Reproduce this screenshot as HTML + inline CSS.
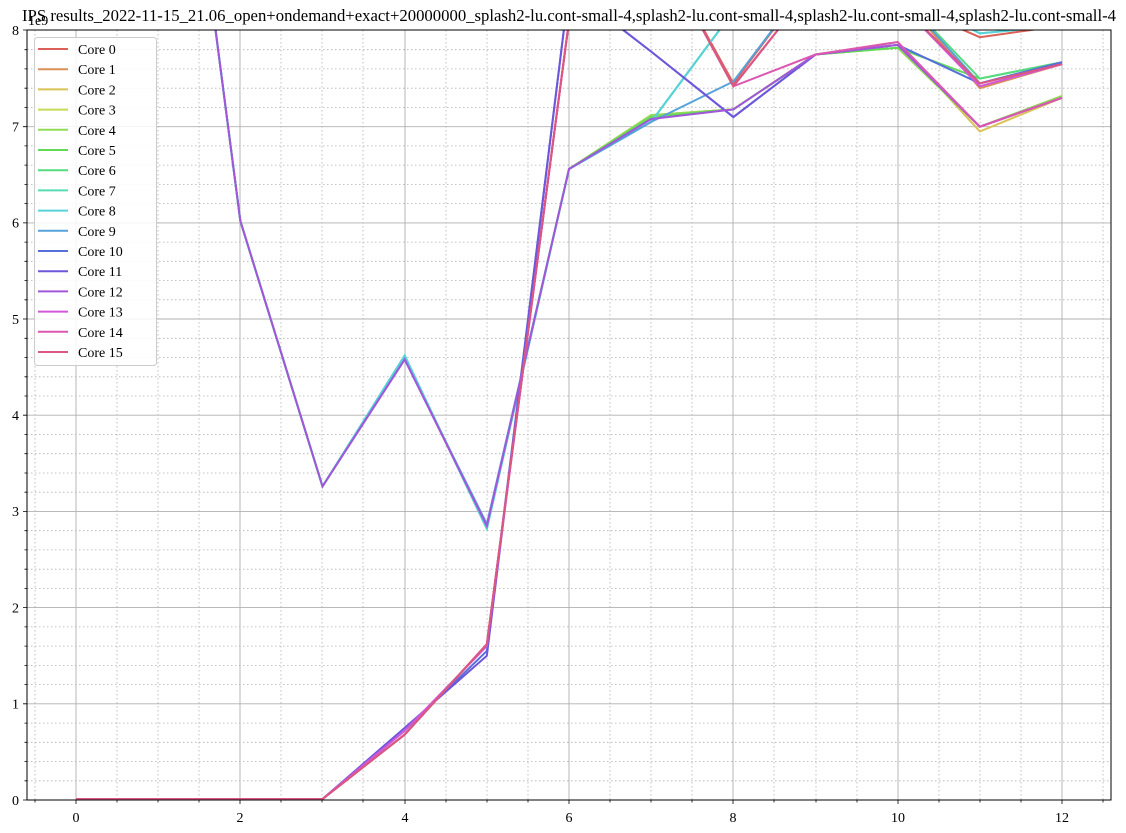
<!DOCTYPE html>
<html><head><meta charset="utf-8"><style>
html,body{margin:0;padding:0;background:#fff;}
svg{display:block;font-family:"Liberation Serif",serif;}
</style></head><body>
<svg width="1126" height="833" viewBox="0 0 1126 833" xmlns="http://www.w3.org/2000/svg">
<defs><clipPath id="c"><rect x="27" y="30" width="1084" height="770"/></clipPath></defs>
<rect width="1126" height="833" fill="#fff"/>
<g stroke="#b0b0b0" stroke-width="0.8" stroke-dasharray="1.5,2.5" fill="none">
<path d="M35 30V800M117 30V800M158 30V800M199 30V800M281 30V800M322 30V800M363 30V800M446 30V800M487 30V800M528 30V800M610 30V800M651 30V800M692 30V800M774 30V800M816 30V800M857 30V800M939 30V800M980 30V800M1021 30V800M1103 30V800"/>
<path d="M27 780.8H1111M27 761.5H1111M27 742.3H1111M27 723.1H1111M27 684.6H1111M27 665.4H1111M27 646.1H1111M27 626.9H1111M27 588.4H1111M27 569.2H1111M27 549.9H1111M27 530.7H1111M27 492.2H1111M27 473H1111M27 453.7H1111M27 434.5H1111M27 396H1111M27 376.8H1111M27 357.5H1111M27 338.3H1111M27 299.8H1111M27 280.6H1111M27 261.3H1111M27 242.1H1111M27 203.6H1111M27 184.4H1111M27 165.1H1111M27 145.9H1111M27 107.4H1111M27 88.2H1111M27 68.9H1111M27 49.7H1111"/>
</g>
<g stroke="#b0b0b0" stroke-width="0.9" fill="none">
<path d="M76 30V800M240 30V800M405 30V800M569 30V800M733 30V800M898 30V800M1062 30V800"/>
<path d="M27 703.8H1111M27 607.6H1111M27 511.4H1111M27 415.2H1111M27 319H1111M27 222.9H1111M27 126.7H1111"/>
</g>
<g clip-path="url(#c)">
<g transform="translate(76,800) scale(82.17,-96.19)" fill="none" stroke-width="2">
<polyline vector-effect="non-scaling-stroke" stroke="hsl(4,65%,60%)" points="0,0.01 1,0.01 2,0.01 3,0.01 4,0.68 5,1.62 6,8.1 7,9 8,7.45 9,8.6 10,8.3 11,7.93 12,8.05"/>
<polyline vector-effect="non-scaling-stroke" stroke="hsl(26,65%,60%)" points="0,0.01 1,0.01 2,0.01 3,0.01 4,0.68 5,1.62 6,8.1 7,9 8,7.42 9,8.5 10,8.4 11,7.4 12,7.65"/>
<polyline vector-effect="non-scaling-stroke" stroke="hsl(49,65%,60%)" points="0,20 1,12.6 2,6.02 3,3.26 4,4.6 5,2.85 6,6.56 7,7.12 8,7.18 9,7.75 10,7.88 11,6.95 12,7.3"/>
<polyline vector-effect="non-scaling-stroke" stroke="hsl(71,65%,60%)" points="0,20 1,12.6 2,6.02 3,3.26 4,4.6 5,2.85 6,6.56 7,7.12 8,7.18 9,7.75 10,7.82 11,7.0 12,7.32"/>
<polyline vector-effect="non-scaling-stroke" stroke="hsl(94,65%,60%)" points="0,20 1,12.6 2,6.02 3,3.26 4,4.6 5,2.85 6,6.56 7,7.12 8,7.18 9,7.75 10,7.82 11,7.0 12,7.32"/>
<polyline vector-effect="non-scaling-stroke" stroke="hsl(116,65%,60%)" points="0,20 1,12.6 2,6.02 3,3.26 4,4.6 5,2.85 6,6.56 7,7.1 8,7.18 9,7.75 10,7.82 11,7.5 12,7.67"/>
<polyline vector-effect="non-scaling-stroke" stroke="hsl(139,65%,60%)" points="0,20 1,12.6 2,6.02 3,3.26 4,4.62 5,2.82 6,6.56 7,7.05 8,8.2 9,8.6 10,8.4 11,7.5 12,7.67"/>
<polyline vector-effect="non-scaling-stroke" stroke="hsl(161,65%,60%)" points="0,20 1,12.6 2,6.02 3,3.26 4,4.62 5,2.82 6,6.56 7,7.05 8,8.2 9,8.6 10,8.4 11,7.97 12,8.05"/>
<polyline vector-effect="non-scaling-stroke" stroke="hsl(184,65%,60%)" points="0,20 1,12.6 2,6.02 3,3.26 4,4.62 5,2.82 6,6.56 7,7.05 8,8.2 9,8.6 10,8.4 11,7.97 12,8.05"/>
<polyline vector-effect="non-scaling-stroke" stroke="hsl(206,65%,60%)" points="0,20 1,12.6 2,6.02 3,3.26 4,4.58 5,2.87 6,6.56 7,7.05 8,7.47 9,8.6 10,8.4 11,7.45 12,7.67"/>
<polyline vector-effect="non-scaling-stroke" stroke="hsl(229,65%,60%)" points="0,0.01 1,0.01 2,0.01 3,0.01 4,0.72 5,1.55 6,8.44 7,7.78 8,7.1 9,7.75 10,7.85 11,7.45 12,7.67"/>
<polyline vector-effect="non-scaling-stroke" stroke="hsl(251,65%,60%)" points="0,0.01 1,0.01 2,0.01 3,0.01 4,0.75 5,1.5 6,8.44 7,7.78 8,7.1 9,7.75 10,7.85 11,7.0 12,7.3"/>
<polyline vector-effect="non-scaling-stroke" stroke="hsl(274,65%,60%)" points="0,20 1,12.6 2,6.02 3,3.26 4,4.58 5,2.85 6,6.56 7,7.08 8,7.18 9,7.75 10,7.85 11,7.0 12,7.3"/>
<polyline vector-effect="non-scaling-stroke" stroke="hsl(296,65%,60%)" points="0,0.01 1,0.01 2,0.01 3,0.01 4,0.72 5,1.6 6,8.1 7,9 8,7.42 9,8.5 10,8.3 11,7.42 12,7.65"/>
<polyline vector-effect="non-scaling-stroke" stroke="hsl(319,65%,60%)" points="0,0.01 1,0.01 2,0.01 3,0.01 4,0.68 5,1.62 6,8.1 7,9 8,7.42 9,7.75 10,7.88 11,7.0 12,7.3"/>
<polyline vector-effect="non-scaling-stroke" stroke="hsl(341,65%,60%)" points="0,0.01 1,0.01 2,0.01 3,0.01 4,0.68 5,1.62 6,8.1 7,9 8,7.42 9,8.5 10,8.3 11,7.45 12,7.65"/>
</g></g>
<rect x="27" y="30" width="1084" height="770" fill="none" stroke="#000" stroke-width="1"/>
<g stroke="#000" stroke-width="0.8">
<path d="M27 800h-4M27 703.8h-4M27 607.6h-4M27 511.4h-4M27 415.2h-4M27 319h-4M27 222.9h-4M27 126.7h-4M27 30h-4"/>
<path d="M76 800v4M240 800v4M405 800v4M569 800v4M733 800v4M898 800v4M1062 800v4"/>
<path d="M35 800v2.5M117 800v2.5M158 800v2.5M199 800v2.5M281 800v2.5M322 800v2.5M363 800v2.5M446 800v2.5M487 800v2.5M528 800v2.5M610 800v2.5M651 800v2.5M692 800v2.5M774 800v2.5M816 800v2.5M857 800v2.5M939 800v2.5M980 800v2.5M1021 800v2.5M1103 800v2.5"/>
<path d="M27 780.8h-2.5M27 761.5h-2.5M27 742.3h-2.5M27 723.1h-2.5M27 684.6h-2.5M27 665.4h-2.5M27 646.1h-2.5M27 626.9h-2.5M27 588.4h-2.5M27 569.2h-2.5M27 549.9h-2.5M27 530.7h-2.5M27 492.2h-2.5M27 473h-2.5M27 453.7h-2.5M27 434.5h-2.5M27 396h-2.5M27 376.8h-2.5M27 357.5h-2.5M27 338.3h-2.5M27 299.8h-2.5M27 280.6h-2.5M27 261.3h-2.5M27 242.1h-2.5M27 203.6h-2.5M27 184.4h-2.5M27 165.1h-2.5M27 145.9h-2.5M27 107.4h-2.5M27 88.2h-2.5M27 68.9h-2.5M27 49.7h-2.5"/>
</g>
<g font-size="14" fill="#000" text-anchor="end">
<text x="19" y="805">0</text><text x="19" y="708.5">1</text><text x="19" y="612.5">2</text><text x="19" y="516">3</text><text x="19" y="420">4</text><text x="19" y="324">5</text><text x="19" y="227.5">6</text><text x="19" y="131.5">7</text><text x="19" y="35">8</text>
</g>
<g font-size="14" fill="#000" text-anchor="middle">
<text x="76" y="822">0</text><text x="240" y="822">2</text><text x="405" y="822">4</text><text x="569" y="822">6</text><text x="733" y="822">8</text><text x="898" y="822">10</text><text x="1062" y="822">12</text>
</g>
<text x="28" y="25" font-size="14">1e9</text>
<text x="569" y="21" font-size="17" text-anchor="middle" textLength="1094" lengthAdjust="spacingAndGlyphs">IPS results_2022-11-15_21.06_open+ondemand+exact+20000000_splash2-lu.cont-small-4,splash2-lu.cont-small-4,splash2-lu.cont-small-4,splash2-lu.cont-small-4</text>
<rect x="34.5" y="37.5" width="122" height="328" rx="3" fill="#fff" fill-opacity="0.85" stroke="#ccc"/>
<g stroke-width="2" font-size="14">
<line x1="38" x2="68" y1="49" y2="49" stroke="hsl(4,65%,60%)"/><text x="78" y="54">Core 0</text>
<line x1="38" x2="68" y1="69.2" y2="69.2" stroke="hsl(26,65%,60%)"/><text x="78" y="74.2">Core 1</text>
<line x1="38" x2="68" y1="89.4" y2="89.4" stroke="hsl(49,65%,60%)"/><text x="78" y="94.4">Core 2</text>
<line x1="38" x2="68" y1="109.6" y2="109.6" stroke="hsl(71,65%,60%)"/><text x="78" y="114.6">Core 3</text>
<line x1="38" x2="68" y1="129.8" y2="129.8" stroke="hsl(94,65%,60%)"/><text x="78" y="134.8">Core 4</text>
<line x1="38" x2="68" y1="150" y2="150" stroke="hsl(116,65%,60%)"/><text x="78" y="155">Core 5</text>
<line x1="38" x2="68" y1="170.2" y2="170.2" stroke="hsl(139,65%,60%)"/><text x="78" y="175.2">Core 6</text>
<line x1="38" x2="68" y1="190.4" y2="190.4" stroke="hsl(161,65%,60%)"/><text x="78" y="195.4">Core 7</text>
<line x1="38" x2="68" y1="210.6" y2="210.6" stroke="hsl(184,65%,60%)"/><text x="78" y="215.6">Core 8</text>
<line x1="38" x2="68" y1="230.8" y2="230.8" stroke="hsl(206,65%,60%)"/><text x="78" y="235.8">Core 9</text>
<line x1="38" x2="68" y1="251" y2="251" stroke="hsl(229,65%,60%)"/><text x="78" y="256">Core 10</text>
<line x1="38" x2="68" y1="271.2" y2="271.2" stroke="hsl(251,65%,60%)"/><text x="78" y="276.2">Core 11</text>
<line x1="38" x2="68" y1="291.4" y2="291.4" stroke="hsl(274,65%,60%)"/><text x="78" y="296.4">Core 12</text>
<line x1="38" x2="68" y1="311.6" y2="311.6" stroke="hsl(296,65%,60%)"/><text x="78" y="316.6">Core 13</text>
<line x1="38" x2="68" y1="331.8" y2="331.8" stroke="hsl(319,65%,60%)"/><text x="78" y="336.8">Core 14</text>
<line x1="38" x2="68" y1="352" y2="352" stroke="hsl(341,65%,60%)"/><text x="78" y="357">Core 15</text>
</g>
</svg>
</body></html>
